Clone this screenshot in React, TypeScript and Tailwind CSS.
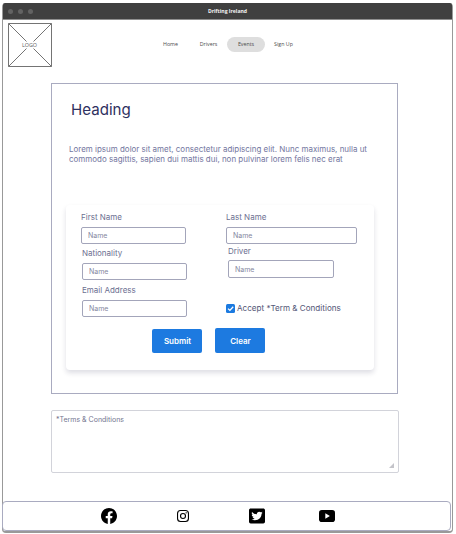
import React from "react";

function Field({ label, className, inputClass }: { label: string; className: string; inputClass: string }) {
  return (
    <label className={`block ${className}`}>
      <span className="block h-[10px] whitespace-nowrap text-[8px] leading-[11px] text-[#6c6f91]">{label}</span>
      <input
        placeholder="Name"
        className={`block rounded-[2px] border border-[#a3a5ba] bg-white px-[6px] text-[7px] text-[#8587a0] placeholder:text-[#8587a0] outline-none ${inputClass}`}
      />
    </label>
  );
}

function TitleBar() {
  return (
    <div className="grid h-[17px] shrink-0 grid-cols-3 items-center rounded-t-[2px] border-b border-[#8f8f8f] bg-[#404040] px-[5px]">
      <div className="flex gap-[5px]">
        <i className="size-[5px] rounded-full bg-[#626262]" />
        <i className="size-[5px] rounded-full bg-[#626262]" />
        <i className="size-[5px] rounded-full bg-[#626262]" />
      </div>
      <div className="text-center font-['Open_Sans',sans-serif] text-[5.1px] leading-[8px] font-bold text-[#f2f2f2]">Drifting Ireland</div>
    </div>
  );
}

function Header() {
  return (
    <header className="flex h-[63px] shrink-0 font-['Open_Sans',sans-serif] text-[#4c4c4c]">
      <svg className="mt-[3px] ml-[5px] size-[44px] shrink-0" viewBox="0 0 44 44">
        <path d="M.5 .5H43.5V43.5H.5ZM.5 .5L43.5 43.5M43.5 .5L.5 43.5" fill="none" stroke="#747474" strokeWidth="1" />
        <rect x="14" y="18.5" width="15" height="7" fill="#fff" />
        <text x="21.500" y="24.2" textAnchor="middle" fontSize="5.4" fill="#5c5c5c">LOGO</text>
      </svg>
      <nav className="mt-[17px] ml-[97px] flex h-[15px] text-[5.3px] leading-[15px]">
        <a className="w-[43px] text-center">Home</a>
        <a className="ml-px w-[31px] text-center">Drivers</a>
        <a className="ml-[3px] w-[38px] rounded-full bg-[#dedede] text-center">Events</a>
        <a className="w-[37px] text-center">Sign Up</a>
      </nav>
    </header>
  );
}

function SignUpForm() {
  return (
    <form className="mt-[41px] ml-[14px] flex h-[165px] w-[308px] flex-col rounded-[4px] bg-white shadow-[0_3px_5px_rgba(35,35,75,0.15)]">
      <div className="flex h-[123px] pt-[7px] pl-[15px]">
        <div className="w-[145px]">
          <Field label="First Name" className="h-[36px]" inputClass="h-[17px] w-[105px] mt-[5px]" />
          <Field label="Nationality" className="ml-px h-[37px]" inputClass="h-[17px] w-[105px] mt-[5px]" />
          <Field label="Email Address" className="ml-px" inputClass="h-[17px] w-[105px] mt-[5px]" />
        </div>
        <div>
          <Field label="Last Name" className="h-[34px]" inputClass="h-[17px] w-[131px] mt-[5px]" />
          <Field label="Driver" className="ml-[2px]" inputClass="h-[18px] w-[106px] mt-[4px]" />
          <label className="mt-[25px] flex h-[10px] items-center gap-[2px] text-[8.1px] leading-[10px] whitespace-nowrap text-[#535676]">
            <svg className="size-[9px]" viewBox="0 0 9 9">
              <rect width="9" height="9" rx="1.5" fill="#1b7ae0" />
              <path d="M2 4.6L3.9 6.4L7.2 2.7" fill="none" stroke="#fff" strokeWidth="1.3" />
            </svg>
            Accept *Term &amp; Conditions
          </label>
        </div>
      </div>
      <div className="flex items-end gap-[13px] pl-[86px] text-[8px] font-semibold text-white">
        <button type="button" className="h-[24px] w-[50px] rounded-[2px] bg-[#1d7ae0] pl-px">Submit</button>
        <button type="button" className="h-[25px] w-[50px] rounded-[2px] bg-[#1d7ae0] pl-px">Clear</button>
      </div>
    </form>
  );
}

function Footer() {
  return (
    <footer className="mt-[28px] -ml-px flex h-[31px] w-[449px] items-center rounded-[4px] border border-[#a9abc0] pl-[98px] text-black">
      <svg className="size-[16px]" viewBox="0 0 24 24" fill="currentColor">
        <path d="M24 12.07C24 5.4 18.63 0 12 0S0 5.4 0 12.07C0 18.1 4.39 23.1 10.13 24v-8.44H7.08v-3.49h3.05V9.41c0-3.02 1.79-4.69 4.53-4.69 1.31 0 2.68.24 2.68.24v2.97h-1.51c-1.49 0-1.96.93-1.96 1.89v2.25h3.33l-.53 3.49h-2.8V24C19.61 23.1 24 18.1 24 12.07Z" />
      </svg>
      <svg className="ml-[60px] size-[12px]" viewBox="0 0 24 24" fill="none" stroke="currentColor" strokeWidth="2.2">
        <rect x="1.1" y="1.1" width="21.8" height="21.8" rx="6" />
        <circle cx="12" cy="12" r="5" />
        <circle cx="18.3" cy="5.7" r="1.4" fill="currentColor" stroke="none" />
      </svg>
      <svg className="ml-[60px] size-[16px]" viewBox="0 16 448 480" preserveAspectRatio="none" fill="currentColor">
        <path d="M400 32H48C21.500 32 0 53.500 0 80v352c0 26.500 21.500 48 48 48h352c26.500 0 48-21.500 48-48V80c0-26.500-21.500-48-48-48zm-48.900 158.800c.2 2.800.2 5.700.2 8.500 0 86.700-66 186.600-186.600 186.600-37.200 0-71.700-10.800-100.700-29.400 5.300.6 10.400.8 15.800.8 30.700 0 58.900-10.400 81.400-28-28.800-.6-53-19.500-61.300-45.500 10.100 1.500 19.200 1.500 29.600-1.200-30-6.100-52.500-32.500-52.500-64.400v-.8c8.700 4.900 18.900 7.900 29.600 8.300a65.447 65.447 0 0 1-29.200-54.600c0-12.200 3.200-23.400 8.900-33.100 32.300 39.800 80.800 65.800 135.200 68.600-9.300-44.500 24-80.600 64-80.600 18.900 0 35.900 7.900 47.900 20.700 14.800-2.800 29-8.300 41.600-15.800-4.900 15.200-15.200 28-28.800 36.100 13.200-1.400 26-5.100 37.800-10.200-8.900 13.100-20.100 24.700-32.900 34z" />
      </svg>
      <svg className="ml-[54px] h-[12px] w-[16px]" viewBox="0 0 16 12">
        <rect width="16" height="12" rx="2.8" fill="currentColor" />
        <path d="M6.300 3.300L10.900 6L6.300 8.700Z" fill="#fff" />
      </svg>
    </footer>
  );
}

export default function App() {
  return (
    <div className="h-[534px] w-[456px] overflow-hidden bg-white pt-[3px] pl-[2px] font-['Inter',sans-serif]">
      <div className="flex h-[530px] w-[451px] flex-col rounded-[4px] border border-t-0 border-b-2 border-[#999]">
        <TitleBar />
        <Header />
        <main className="ml-[48px] h-[311px] w-[347px] shrink-0 border border-[#a9abc0]">
          <h1 className="mt-[16px] ml-[19px] h-[20px] text-[15.1px] leading-[20px] text-[#2e3060]">Heading</h1>
          <p className="mt-[24px] ml-[17px] h-[20px] text-[7.980px] leading-[10px] whitespace-nowrap text-[#7376a0]">
            Lorem ipsum dolor sit amet, consectetur adipiscing elit. Nunc maximus, nulla ut
            <br />
            commodo sagittis, sapien dui mattis dui, non pulvinar lorem felis nec erat
          </p>
          <SignUpForm />
        </main>
        <div className="mt-[16px] ml-[48px] flex h-[63px] w-[348px] shrink-0 justify-between rounded-[2px] border border-[#d2d3da] p-[4px] text-[7px] leading-[10px] text-[#74768f]">
          *Terms &amp; Conditions
          <svg className="size-[5px] self-end" viewBox="0 0 5 5"><path d="M5 0V5H0Z" fill="#c4c4ca" /></svg>
        </div>
        <Footer />
      </div>
    </div>
  );
}
